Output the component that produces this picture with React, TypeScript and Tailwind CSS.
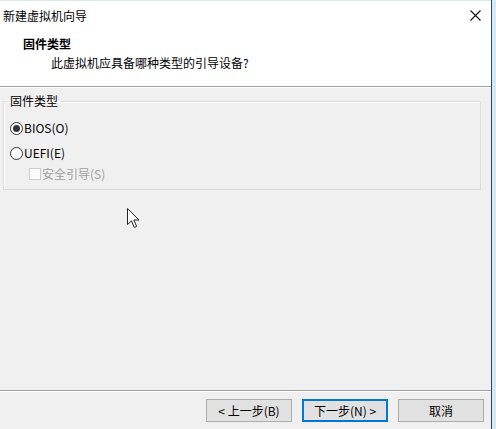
import React from 'react'

const font = "font-['Noto_Sans_CJK_SC','Liberation_Sans',sans-serif]"

const Radio: React.FC<{ checked?: boolean; label: string }> = ({ checked, label }) => {
  return (
    <div className="flex items-center h-[16px]">
      <span className="ml-[6px] w-[13px] h-[13px] rounded-full border border-[#333333] bg-white flex items-center justify-center">
        {checked && <span className="w-[7px] h-[7px] rounded-full bg-[#333333]" />}
      </span>
      <span className="ml-[1px] text-[12px] leading-[16px] text-black">{label}</span>
    </div>
  )
}

const Button: React.FC<{ label: string; primary?: boolean }> = ({ label, primary }) => {
  return (
    <div
      className={
        primary
          ? 'w-[86px] h-[23px] border-2 border-[#0078d7] bg-[#e1e1e1] flex items-center justify-center text-[12px] text-black'
          : 'w-[86px] h-[23px] border border-[#adadad] bg-[#e1e1e1] flex items-center justify-center text-[12px] text-black'
      }
    >
      {label}
    </div>
  )
}

const Cursor: React.FC = () => {
  return (
    <svg className="absolute left-[127px] top-[208px]" width="13" height="21" viewBox="0 0 13 21">
      <path
        d="M0.5 0.5 L0.5 16.5 L4.5 12.8 L7.3 19.5 L9.6 18.5 L6.9 12 L12 12 Z"
        fill="white"
        stroke="#222222"
        strokeWidth="1"
        strokeLinejoin="round"
      />
    </svg>
  )
}

export default function App() {
  return (
    <div className={`relative w-[496px] h-[429px] flex bg-[#d9e6f4] ${font}`}>
      <div className="w-[492px] h-full flex flex-col bg-[#f0f0f0] border-r border-[#1c4f86]">
        <header className="h-[86px] bg-white border-t border-[#d8e8f7] flex flex-col">
          <div className="h-[29px] flex items-center justify-between pl-[3px] pr-[10px]">
            <span className="text-[12px] leading-[16px] text-black">新建虚拟机向导</span>
            <svg width="11" height="11" viewBox="0 0 11 11">
              <path d="M0.5 0.5 L10.5 10.5 M10.5 0.5 L0.5 10.5" stroke="#111111" strokeWidth="1.1" />
            </svg>
          </div>
          <p className="mt-[6px] pl-[23px] text-[12px] leading-[16px] font-bold text-black">固件类型</p>
          <p className="mt-[3px] pl-[51px] text-[12px] leading-[16px] text-black">此虚拟机应具备哪种类型的引导设备?</p>
        </header>
        <div className="h-px bg-[#a0a0a0]" />
        <div className="h-px bg-white" />

        <fieldset className="mt-[5px] ml-[3px] mr-[10px] h-[97px] border border-[#dcdcdc] shadow-[inset_1px_1px_0_#ffffff] px-0 pt-0 pb-0">
          <legend className="ml-[3px] px-[3px] text-[12px] leading-[16px] text-black">固件类型</legend>
          <div className="flex flex-col mt-[11px]">
            <Radio checked label="BIOS(O)" />
            <div className="mt-[9px]">
              <Radio label="UEFI(E)" />
            </div>
            <div className="mt-[5px] flex items-center h-[16px]">
              <span className="ml-[25px] w-[12px] h-[12px] border border-[#cccccc] bg-[#fbfbfb]" />
              <span className="ml-[1px] text-[12px] leading-[16px] text-[#a0a0a0]">安全引导(S)</span>
            </div>
          </div>
        </fieldset>

        <div className="flex-1" />
        <div className="h-px bg-[#a0a0a0]" />
        <div className="h-px bg-white" />
        <div className="h-[37px] flex items-start justify-end gap-[10px] pt-[7px] pr-[7px]">
          <Button label="< 上一步(B)" />
          <Button label="下一步(N) >" primary />
          <Button label="取消" />
        </div>
      </div>
      <Cursor />
    </div>
  )
}
